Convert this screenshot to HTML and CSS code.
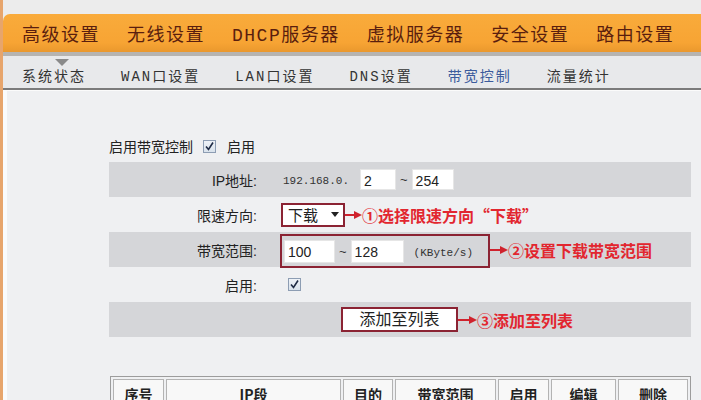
FILE: index.html
```html
<!DOCTYPE html>
<html lang="zh-CN">
<head>
	<meta charset="UTF-8">
	<title>带宽控制</title>
	<link rel="stylesheet" href="styles.css">
</head>
<body>
	<div class="page">
		<div class="header">
			<ul class="topnav">
				<li>高级设置</li>
				<li>无线设置</li>
				<li>DHCP服务器</li>
				<li>虚拟服务器</li>
				<li>安全设置</li>
				<li>路由设置</li>
			</ul>
			<ul class="subnav">
				<li class="first">系统状态</li>
				<li>WAN口设置</li>
				<li>LAN口设置</li>
				<li>DNS设置</li>
				<li class="active">带宽控制</li>
				<li>流量统计</li>
			</ul>
		</div>

		<div class="content">
			<div class="switch-line">
				<span>启用带宽控制</span>
				<span class="check"><svg width="11" height="11" viewBox="0 0 11 11"><path d="M2 5.5 L4.5 8.5 L9 1.5" fill="none" stroke="#1f2b45" stroke-width="1.6"/></svg></span>
				<span>启用</span>
			</div>

			<!-- 表单行 -->
			<div class="row shade">
				<div class="label">IP地址:</div>
				<div class="value">
					<span class="mono ip">192.168.0.</span>
					<span class="input w36">2</span>
					<span class="tilde">~</span>
					<span class="input w42">254</span>
				</div>
			</div>
			<div class="row">
				<div class="label">限速方向:</div>
				<div class="value">
					<div class="select">下载<i class="caret"></i></div>
					<svg class="arrow" width="17" height="10" viewBox="0 0 17 10"><line x1="0" y1="5" x2="10" y2="5" stroke="#cf222d" stroke-width="2"/><polygon points="9,1 17,5 9,9" fill="#cf222d"/></svg>
					<span class="note">①选择限速方向“下载”</span>
				</div>
			</div>
			<div class="row shade">
				<div class="label">带宽范围:</div>
				<div class="value">
					<div class="redbox">
						<span class="input w51">100</span>
						<span class="tilde">~</span>
						<span class="input w53">128</span>
						<span class="mono unit">(KByte/s)</span>
					</div>
					<svg class="arrow" width="18" height="10" viewBox="0 0 18 10"><line x1="0" y1="5" x2="11" y2="5" stroke="#cf222d" stroke-width="2"/><polygon points="10,1 18,5 10,9" fill="#cf222d"/></svg>
					<span class="note">②设置下载带宽范围</span>
				</div>
			</div>
			<div class="row">
				<div class="label">启用:</div>
				<div class="value">
					<span class="check small-gap"><svg width="11" height="11" viewBox="0 0 11 11"><path d="M2 5.5 L4.5 8.5 L9 1.5" fill="none" stroke="#1f2b45" stroke-width="1.6"/></svg></span>
				</div>
			</div>
			<div class="row shade">
				<div class="label"></div>
				<div class="value">
					<div class="add-btn">添加至列表</div>
					<svg class="arrow" width="19" height="10" viewBox="0 0 19 10"><line x1="0" y1="5" x2="12" y2="5" stroke="#cf222d" stroke-width="2"/><polygon points="11,1 19,5 11,9" fill="#cf222d"/></svg>
					<span class="note">③添加至列表</span>
				</div>
			</div>

			<table class="list">
				<tr>
					<th class="c1">序号</th>
					<th class="c2">IP段</th>
					<th class="c3">目的</th>
					<th class="c4">带宽范围</th>
					<th class="c5">启用</th>
					<th class="c6">编辑</th>
					<th class="c7">删除</th>
				</tr>
			</table>
		</div>
	</div>
</body>
</html>
```

FILE: styles.css
```css
* {
	margin: 0;
	padding: 0;
}
body {
	font-family: "Liberation Sans", "Noto Sans CJK SC", sans-serif;
	background: #eff0f2;
	color: #222;
}
.page {
	height: 400px;
	overflow: hidden;
	border-left: 3px solid #e7a56c;
}

/* 顶部导航 */
.header {
	background: #ececec;
	padding-top: 14px;
}
.topnav {
	list-style: none;
	display: flex;
	align-items: center;
	gap: 27px;
	height: 38px;
	padding-left: 19px;
	background: linear-gradient(#f9ab3b, #f7a434 75%, #ea982d);
	border-radius: 7px 0 0 0;
	border-bottom: 4px solid #b6b4b1;
}
.topnav li {
	font-family: "Liberation Mono", "Noto Sans CJK SC", monospace;
	font-size: 18px;
	letter-spacing: 1.5px;
	color: #5a1e0e;
	white-space: nowrap;
}
.subnav {
	list-style: none;
	display: flex;
	align-items: center;
	gap: 35px;
	height: 26px;
	padding: 6px 0 0 19px;
	background: #e8e9eb;
	border-bottom: 2px solid #7b7b7b;
}
.subnav li {
	position: relative;
	font-family: "Liberation Mono", "Noto Sans CJK SC", monospace;
	font-size: 14px;
	letter-spacing: 2px;
	color: #333;
	white-space: nowrap;
}
.subnav li.active {
	color: #3b5b9c;
}
.subnav li.first::before {
	content: "";
	position: absolute;
	left: 33px;
	top: -6px;
	border-left: 7px solid transparent;
	border-right: 7px solid transparent;
	border-top: 7px solid #8a8a8a;
}

/* 内容 */
.content {
	border-top: 1px solid #fbfbfb;
	border-left: 4px solid #fafbfc;
	padding: 45px 10px 0 102px;
}
.switch-line {
	display: flex;
	align-items: center;
	height: 20px;
	margin-bottom: 6px;
	font-size: 14px;
}
.check {
	display: inline-flex;
	align-items: center;
	justify-content: center;
	width: 13px;
	height: 13px;
	box-sizing: border-box;
	border: 1px solid #8d9db3;
	background: linear-gradient(#eef2f7, #d9e2ec);
	margin: 0 11px 0 10px;
}
.check.small-gap {
	margin: 0 0 0 7px;
}
.row {
	display: grid;
	grid-template-columns: 148px 1fr;
	align-items: center;
	height: 35px;
	font-size: 14px;
}
.row.shade {
	background: #d5d6d9;
}
.label {
	text-align: right;
	color: #222;
}
.value {
	display: flex;
	align-items: center;
	padding-left: 24px;
}
.mono {
	font-family: "Liberation Mono", monospace;
	font-size: 11px;
	color: #333;
}
.ip {
	margin: 3px 11px 0 2px;
}
.input {
	display: inline-block;
	height: 21px;
	line-height: 22px;
	padding-left: 3px;
	box-sizing: border-box;
	background: #fff;
	border: 1px solid #e6e6e6;
	font-size: 14px;
	color: #222;
}
.w36 { width: 36px; }
.w42 { width: 42px; }
.w51 { width: 51px; height: 23px; line-height: 23px; }
.w53 { width: 53px; height: 23px; line-height: 23px; }
.tilde {
	font-size: 13px;
	color: #333;
	margin: 0 4px;
}
.select {
	display: flex;
	align-items: center;
	width: 64px;
	height: 24px;
	box-sizing: border-box;
	border: 2px solid #8b2333;
	background: #fff;
	padding-left: 5px;
	font-size: 15px;
}
.caret {
	margin-left: 13px;
	border-left: 4px solid transparent;
	border-right: 4px solid transparent;
	border-top: 5px solid #222;
}
.arrow {
	display: block;
	flex: none;
}
.note {
	font-family: "Noto Sans CJK SC", sans-serif;
	font-weight: bold;
	font-size: 16px;
	color: #e2262f;
	white-space: nowrap;
}
.redbox {
	display: flex;
	align-items: center;
	width: 210px;
	height: 34px;
	box-sizing: border-box;
	margin: 2px 0 0 -1px;
	padding-left: 2px;
	border: 2px solid #8b2333;
}
.unit {
	margin: 3px 0 0 10px;
	font-size: 11px;
}
.add-btn {
	width: 117px;
	height: 25px;
	box-sizing: border-box;
	margin-left: 60px;
	border: 2px solid #8b2333;
	background: #fff;
	text-align: center;
	line-height: 21px;
	font-size: 16px;
}

/* 列表 */
.list {
	margin: 39px 0 0 1px;
	width: 581px;
	table-layout: fixed;
	border: 1px solid #9c9c9c;
	border-spacing: 2px;
}
.list th {
	box-sizing: border-box;
	height: 30px;
	border: 1px solid #b3b3b3;
	background: #f8f8f8;
	font-family: "Noto Sans CJK SC", sans-serif;
	font-size: 14px;
	font-weight: bold;
	color: #222;
}
.c1 { width: 51px; }
.c2 { width: 175px; }
.c3 { width: 50px; }
.c4 { width: 101px; }
.c5 { width: 51px; }
.c6 { width: 65px; }
.c7 { width: 70px; }
```
